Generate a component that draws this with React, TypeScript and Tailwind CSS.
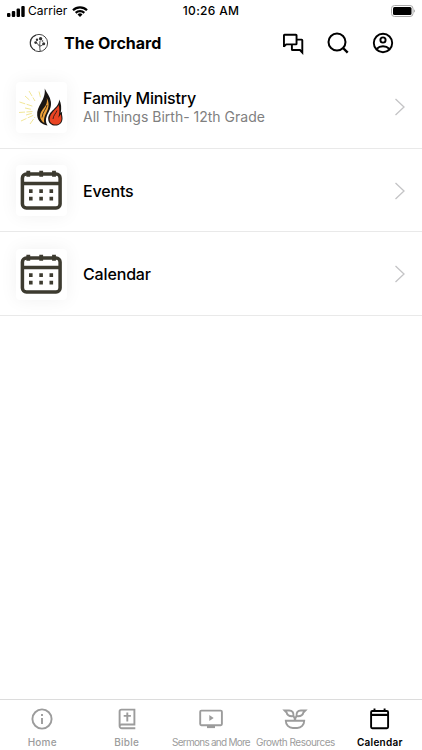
import type { ReactNode } from "react";

type Row = {
  title: string;
  subtitle?: string;
  titleClass: string;
  thumb: ReactNode;
};

type Tab = {
  name: string;
  labelClass: string;
  icon: ReactNode;
  active?: boolean;
};

const OrchardLogo = () => (
  <svg
    className="h-5 w-5"
    viewBox="0 0 20 20"
    fill="none"
    stroke="#333"
    strokeWidth="0.9"
  >
    <circle cx="10" cy="10" r="8.6" />
    <path d="M7 2.200A8 8 0 0 0 6 17.200" strokeWidth="1.100" />
    <path d="M11.200 18c-.6-3-.6-6-.2-10M10.800 13.500c-1-2-2.500-2-3.400-4M11 13c1.400-.2 2.600-.8 3.400-2" />
    <g fill="#333" stroke="none">
      <circle cx="11.600" cy="5.800" r="1.700" />
      <circle cx="8" cy="6.800" r="1.200" />
      <circle cx="6.700" cy="9.600" r="1.400" />
      <circle cx="14.700" cy="10.800" r="1.500" />
      <circle cx="13.500" cy="8" r="0.800" />
    </g>
  </svg>
);

const ChatIcon = () => (
  <svg
    className="h-6 w-6"
    viewBox="0 0 24 24"
    fill="none"
    stroke="currentColor"
    strokeWidth="1.9"
  >
    <path d="M2.950 16V4.300q0-.6.600-.6h11.400q.6 0 .6.600v8.500q0 .6-.6.600H5.200L2.950 15.500" />
    <path d="M15.500 8.600h5.200q.6 0 .6.600v12.300l-2.300-2.500h-7.500q-.6 0-.6-.6v-5" />
  </svg>
);

const SearchIcon = () => (
  <svg
    className="h-6 w-6"
    viewBox="0 0 24 24"
    fill="none"
    stroke="currentColor"
    strokeWidth="2"
  >
    <circle cx="11" cy="11" r="8.500" />
    <path d="M17 17l4.700 4.700" strokeWidth="2.400" />
  </svg>
);

const AccountIcon = () => (
  <svg
    className="h-6 w-6"
    viewBox="0 0 24 24"
    fill="none"
    stroke="currentColor"
    strokeWidth="1.9"
  >
    <circle cx="12" cy="12" r="9.200" />
    <circle cx="12" cy="9" r="2.600" />
    <path d="M5.500 18q2.800-2.700 6.500-2.700t6.500 2.700" />
  </svg>
);

const FlameThumb = () => (
  <svg className="h-[51px] w-[51px]" viewBox="0 0 51 51">
    <g
      stroke="#ede07c"
      strokeWidth="0.8"
      strokeDasharray="6 1.500"
      fill="none"
    >
      <path d="M13 9l6 10M3.500 20l14 4.500M3 30.500l14-1M5 39l13-6M14 42l5-7M23 9.500l1.500 6M9 14l5 4.500M9 26l7 1.500M10 33l7-2" />
    </g>
    <path
      fill="#1b1714"
      d="M28.700 6.500c.6 6-1.200 10-3.700 14.500-2.300 4.200-4.300 7.700-3.800 12.500.6 5.500 4.300 9 10.300 9.900-2-3-2-6.400-.6-9.700 2-4.600 4.800-8.200 4-14-.7-5-4.200-9-6.200-13.200z"
    />
    <path
      fill="#eda23a"
      d="M30.700 16c1.300 5.800-1.800 8.600-4.400 11.900-3.300 4.600-3.300 9.300 2 13.100-1-3.500.4-7 1.900-10 2.500-4.800 3.700-9.500.5-15z"
    />
    <path
      fill="none"
      stroke="#1b1714"
      strokeWidth="0.8"
      d="M31 23c-.5 4-4.500 6.500-5 12.500"
    />
    <path
      fill="#1b1714"
      d="M43.200 17.500c-.2 4.500-2.500 7-5.600 9.900-3.200 3-5.600 5.800-5.400 9.600.2 4.200 3.200 6.600 7.300 6.600 4.300 0 7-3 7-7.300 0-2.600-1-4-.3-6.800l-1.500 1.400c1-4.900.6-9.600-1.500-13.400z"
    />
    <path
      fill="#ea4423"
      d="M42.600 23c-1.600 3.600-8.900 8.200-9 14 0 3.700 2.900 5.600 6 5.600 3.800 0 5.900-2.700 5.900-6.200 0-1.500-.5-2.700-.6-4.200l-2.600 3.600c1.400-4.300 1.500-8.800.3-12.800z"
    />
    <path
      fill="none"
      stroke="#1b1714"
      strokeWidth="0.8"
      d="M41 28.500c-1 3-3.600 4.500-4 8.500"
    />
  </svg>
);

const CalendarThumb = () => (
  <svg
    className="h-[51px] w-[51px]"
    viewBox="0 0 51 51"
    fill="none"
    stroke="#3d3b30"
    strokeWidth="3.500"
  >
    <rect x="6.400" y="9" width="37.700" height="34" rx="4" />
    <path d="M6 18.600h38" />
    <path d="M12.300 5.700v6M25.200 5.700v6M38 5.700v6" strokeWidth="3.800" />
    <path
      d="M13 26.100h3.600M23.300 26.100h3.600M33.500 26.100h3.600M13 33.600h3.600M23.300 33.600h3.600M33.500 33.600h3.600"
      strokeWidth="3.600"
    />
  </svg>
);

const rows: Row[] = [
  {
    title: "Family Ministry",
    subtitle: "All Things Birth- 12th Grade",
    titleClass: "tracking-[-0.2px]",
    thumb: <FlameThumb />,
  },
  {
    title: "Events",
    titleClass: "tracking-[-0.15px]",
    thumb: <CalendarThumb />,
  },
  {
    title: "Calendar",
    titleClass: "tracking-[-0.15px]",
    thumb: <CalendarThumb />,
  },
];

const tabs: Tab[] = [
  {
    name: "Home",
    labelClass: "tracking-[0.2px] font-medium",
    icon: (
      <>
        <circle cx="13" cy="13" r="9.600" />
        <path d="M13 12v6M13 8v2" />
      </>
    ),
  },
  {
    name: "Bible",
    labelClass: "tracking-[0.25px] font-medium",
    icon: (
      <>
        <path d="M21.300 22.200H7.800a2.200 2.200 0 0 1-2.200-2.200V5.500q0-1.900 1.900-1.900h12.900v14.900H7.800a1.900 1.900 0 0 0-2.200 1.800" />
        <path d="M13.300 6.500v9M9.700 9.900h7.200" />
      </>
    ),
  },
  {
    name: "Sermons and More",
    labelClass: "tracking-[-0.75px] font-normal",
    icon: (
      <>
        <rect x="2.200" y="4.600" width="21.700" height="14.600" rx="1.200" />
        <path d="M9 20.900h8" strokeWidth="2.400" />
        <path d="M11.300 8.900v6l4.400-3z" fill="currentColor" stroke="none" />
      </>
    ),
  },
  {
    name: "Growth Resources",
    labelClass: "tracking-[-0.5px] font-normal",
    icon: (
      <>
        <path d="M3.800 14.800h18.400c0 4-3 7.200-7 7.200h-4.400c-4 0-7-3.200-7-7.200z" />
        <path d="M13 15c0-2.600-.6-4.200-2-5.400M13 15c0-2.600.6-4.200 2-5.400" />
        <path d="M2.600 4.500h4.600c3 0 4.600 2 4.300 5.600-4.100.5-6.300-.8-6.900-3.600zM23.400 4.500h-4.600c-3 0-4.600 2-4.300 5.600 4.100.5 6.300-.8 6.900-3.600z" />
      </>
    ),
  },
  {
    name: "Calendar",
    labelClass: "tracking-[0.25px] font-semibold",
    active: true,
    icon: (
      <>
        <rect x="4.100" y="5" width="17" height="17.300" rx="1.200" />
        <path d="M4.100 8.900h17" strokeWidth="2.200" />
        <path d="M7.500 2.500v3M17.600 2.500v3" />
      </>
    ),
  },
];

const StatusBar = () => (
  <div className="flex h-[22px] items-center px-[7px] text-[12px] leading-none">
    <div className="flex flex-1 items-center">
      <svg className="h-[11px] w-[18px]" viewBox="0 0 18 11">
        <rect x="0" y="7" width="3.400" height="4" rx="1" />
        <rect x="4.800" y="5" width="3.400" height="6" rx="1" />
        <rect x="9.600" y="2.500" width="3.400" height="8.500" rx="1" />
        <rect x="14.300" y="0" width="3.400" height="11" rx="1" />
      </svg>
      <span className="ml-[3px]">Carrier</span>
      <svg
        className="ml-[5px] h-[11px] w-4"
        viewBox="0 0 16 11"
        fill="none"
        stroke="currentColor"
        strokeWidth="2.200"
      >
        <path d="M1 4.200a10 10 0 0 1 14 0M3.700 6.900a6.200 6.200 0 0 1 8.600 0" />
        <path
          d="M8 11l-2.500-2.500a3.600 3.600 0 0 1 5 0z"
          fill="currentColor"
          stroke="none"
        />
      </svg>
    </div>
    <span className="font-medium tracking-[0.3px]">10:26 AM</span>
    <div className="flex flex-1 justify-end">
      <svg className="h-3 w-6" viewBox="0 0 24 12">
        <rect
          x="0.500"
          y="0.500"
          width="21.500"
          height="11"
          rx="3"
          fill="none"
          stroke="#aaa"
        />
        <rect x="2" y="2" width="18.500" height="8" rx="1.500" />
        <path d="M22.800 4.200q1.200.5 1.200 1.800t-1.200 1.800z" fill="#aaa" />
      </svg>
    </div>
  </div>
);

const Header = () => (
  <header className="flex h-[43px] items-center pr-[27px] pb-px pl-[29px]">
    <OrchardLogo />
    <h1 className="ml-[15px] flex-1 text-[16px] leading-6 font-bold">
      The Orchard
    </h1>
    <div className="flex gap-[21px]">
      <ChatIcon />
      <SearchIcon />
      <AccountIcon />
    </div>
  </header>
);

const ListRow = ({ title, subtitle, titleClass, thumb }: Row) => (
  <li className="flex h-[83.500px] items-center border-b border-[#e9e9e9] px-4 pt-[2px]">
    <div className="h-[51px] w-[51px] rounded-sm bg-white shadow-[0_0_18px_rgba(0,0,0,0.06)]">
      {thumb}
    </div>
    <div className="ml-4 flex-1">
      <div className={`text-[16px] leading-5 font-medium ${titleClass}`}>
        {title}
      </div>
      {subtitle && (
        <div className="text-[14px] leading-[18px] text-[#808080]">
          {subtitle}
        </div>
      )}
    </div>
    <svg
      className="h-[18px] w-3"
      viewBox="0 0 12 18"
      fill="none"
      stroke="#c4c4c6"
      strokeWidth="1.300"
    >
      <path d="M1.500 1l8.500 8-8.500 8" />
    </svg>
  </li>
);

const TabBar = () => (
  <nav className="grid h-[51px] grid-cols-5 border-t border-[#dcdcdc]">
    {tabs.map(({ name, labelClass, icon, active }) => (
      <div
        key={name}
        className={`flex flex-col items-center pt-[6px] ${
          active ? "text-black" : "text-[#9c9c9c]"
        }`}
      >
        <svg
          className="h-[26px] w-[26px]"
          viewBox="0 0 26 26"
          fill="none"
          stroke="currentColor"
          strokeWidth="1.900"
        >
          {icon}
        </svg>
        <span
          className={`mt-1 text-[10px] leading-3 whitespace-nowrap ${labelClass}`}
        >
          {name}
        </span>
      </div>
    ))}
  </nav>
);

const App = () => (
  <div className="flex h-[750px] w-[422px] flex-col overflow-hidden bg-white font-['Inter','Liberation_Sans',sans-serif] text-black">
    <StatusBar />
    <Header />
    <ul className="flex-1">
      {rows.map((row) => (
        <ListRow key={row.title} {...row} />
      ))}
    </ul>
    <TabBar />
  </div>
);

export default App;
